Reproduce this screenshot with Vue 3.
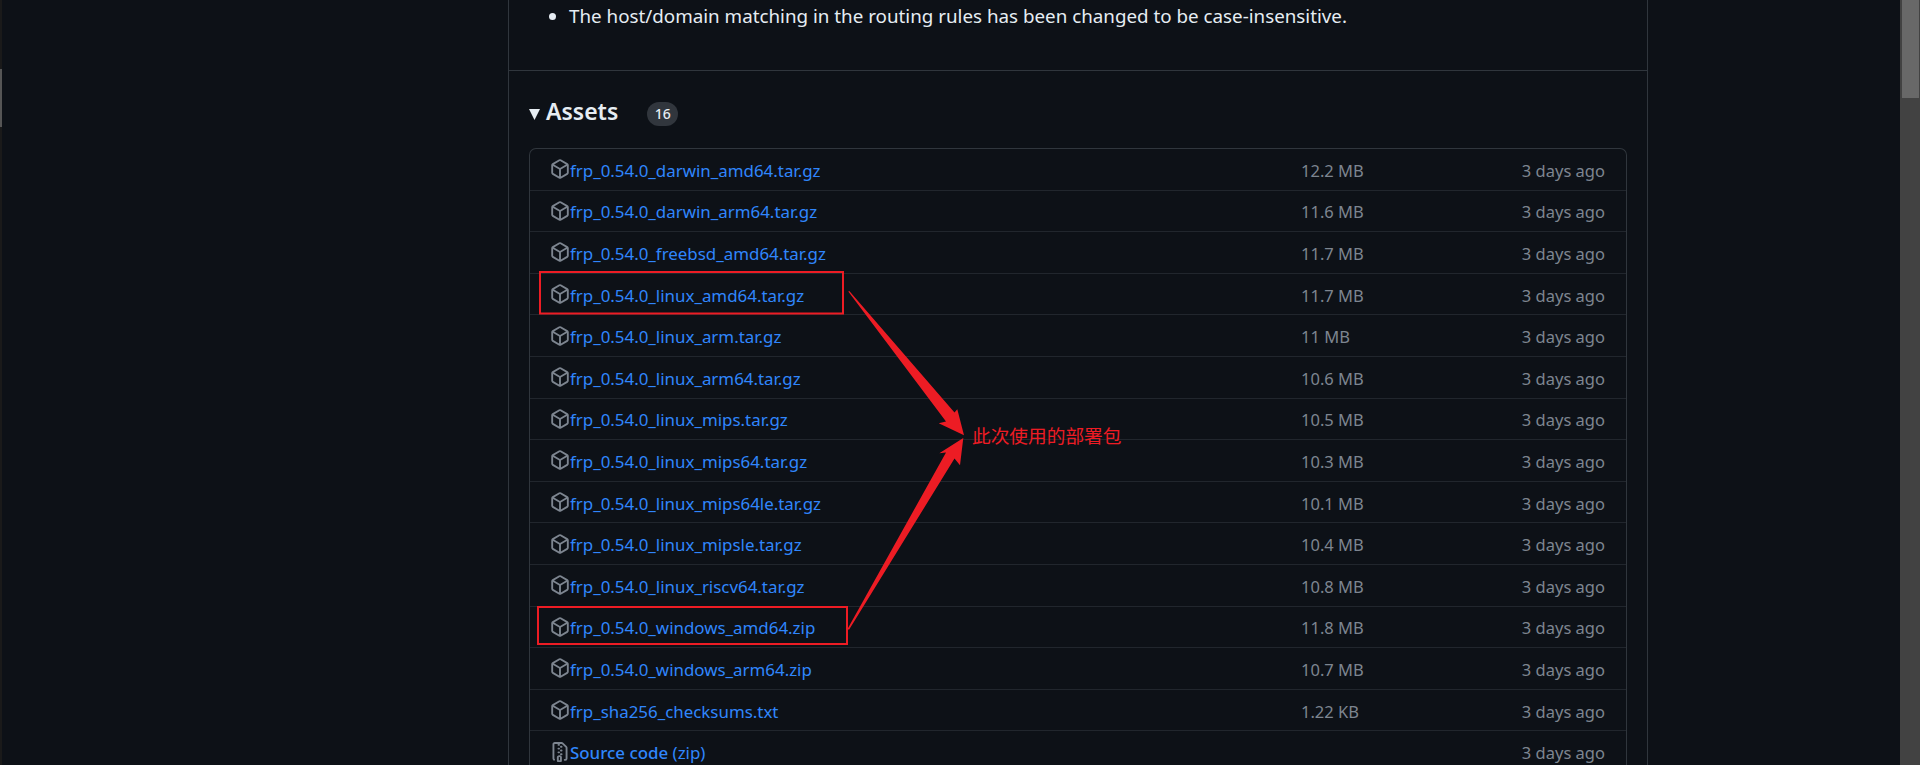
<script setup>
const assets = [
  { name: 'frp_0.54.0_darwin_amd64.tar.gz', size: '12.2 MB' },
  { name: 'frp_0.54.0_darwin_arm64.tar.gz', size: '11.6 MB' },
  { name: 'frp_0.54.0_freebsd_amd64.tar.gz', size: '11.7 MB' },
  { name: 'frp_0.54.0_linux_amd64.tar.gz', size: '11.7 MB' },
  { name: 'frp_0.54.0_linux_arm.tar.gz', size: '11 MB' },
  { name: 'frp_0.54.0_linux_arm64.tar.gz', size: '10.6 MB' },
  { name: 'frp_0.54.0_linux_mips.tar.gz', size: '10.5 MB' },
  { name: 'frp_0.54.0_linux_mips64.tar.gz', size: '10.3 MB' },
  { name: 'frp_0.54.0_linux_mips64le.tar.gz', size: '10.1 MB' },
  { name: 'frp_0.54.0_linux_mipsle.tar.gz', size: '10.4 MB' },
  { name: 'frp_0.54.0_linux_riscv64.tar.gz', size: '10.8 MB' },
  { name: 'frp_0.54.0_windows_amd64.zip', size: '11.8 MB' },
  { name: 'frp_0.54.0_windows_arm64.zip', size: '10.7 MB' },
  { name: 'frp_sha256_checksums.txt', size: '1.22 KB' }
]

const packagePath = 'm8.878.392 5.25 3.045c.54.314.872.89.872 1.514v6.098a1.75 1.75 0 0 1-.872 1.514l-5.25 3.045a1.75 1.75 0 0 1-1.756 0l-5.25-3.045A1.75 1.75 0 0 1 1 11.049V4.951c0-.624.332-1.201.872-1.514L7.122.392a1.75 1.75 0 0 1 1.756 0ZM7.875 1.69l-4.63 2.685L8 7.133l4.755-2.758-4.63-2.685a.248.248 0 0 0-.25 0ZM2.5 5.677v5.372c0 .09.047.171.125.216l4.625 2.683V8.432Zm6.25 8.271 4.625-2.683a.25.25 0 0 0 .125-.216V5.677L8.75 8.432Z'
const zipPath = 'M3.5 1.75v11.5c0 .09.048.173.126.217a.75.75 0 0 1-.752 1.298A1.748 1.748 0 0 1 2 13.25V1.75C2 .784 2.784 0 3.75 0h5.586c.464 0 .909.185 1.237.513l2.914 2.914c.329.328.513.773.513 1.237v8.586A1.75 1.75 0 0 1 12.25 15h-.5a.75.75 0 0 1 0-1.5h.5a.25.25 0 0 0 .25-.25V4.664a.25.25 0 0 0-.073-.177L9.513 1.573a.25.25 0 0 0-.177-.073H7.25a.75.75 0 0 1 0 1.5h-.5a.75.75 0 0 1 0-1.5h-3a.25.25 0 0 0-.25.25Zm3.75 8.75h.5c.966 0 1.75.784 1.75 1.75v3a.75.75 0 0 1-.75.75h-2.5a.75.75 0 0 1-.75-.75v-3c0-.966.784-1.75 1.75-1.75ZM6 5.25a.75.75 0 0 1 .75-.75h.5a.75.75 0 0 1 0 1.5h-.5A.75.75 0 0 1 6 5.25Zm.75 2.25h.5a.75.75 0 0 1 0 1.5h-.5a.75.75 0 0 1 0-1.5ZM8 6.75A.75.75 0 0 1 8.75 6h.5a.75.75 0 0 1 0 1.5h-.5A.75.75 0 0 1 8 6.75ZM8.75 3h.5a.75.75 0 0 1 0 1.5h-.5a.75.75 0 0 1 0-1.5ZM8 9.75A.75.75 0 0 1 8.75 9h.5a.75.75 0 0 1 0 1.5h-.5A.75.75 0 0 1 8 9.75Zm-1 2.5v2.25h1v-2.25a.25.25 0 0 0-.25-.25h-.5a.25.25 0 0 0-.25.25Z'
</script>

<template>
  <div class="page">
    <div class="left-rail"><div class="left-thumb"></div></div>

    <main class="main">
      <section class="release">
        <div class="notes">
          <ul>
            <li>The host/domain matching in the routing rules has been changed to be case-insensitive.</li>
          </ul>
        </div>

        <div class="assets">
          <div class="assets-head">
            <svg class="caret" width="11" height="11" viewBox="0 0 11 11"><polygon points="0,0 11,0 5.5,11" /></svg>
            <h3>Assets</h3>
            <span class="count">16</span>
          </div>

          <div class="asset-box">
            <div v-for="a in assets" :key="a.name" class="asset-row">
              <div class="asset-name">
                <svg class="icon" width="20" height="20" viewBox="0 0 16 16"><path :d="packagePath" /></svg>
                <a href="#">{{ a.name }}</a>
              </div>
              <span class="asset-size">{{ a.size }}</span>
              <span class="asset-date">3 days ago</span>
            </div>
            <div class="asset-row">
              <div class="asset-name">
                <svg class="icon" width="20" height="20" viewBox="0 0 16 16"><path :d="zipPath" /></svg>
                <a href="#"><span class="src">Source code</span> <span class="kind">(zip)</span></a>
              </div>
              <span class="asset-size"></span>
              <span class="asset-date">3 days ago</span>
            </div>
          </div>
        </div>
      </section>
    </main>

    <div class="scrollbar"><div class="scroll-thumb"></div></div>

    <!-- hand drawn markup on top of the screenshot -->
    <svg class="markup" width="1920" height="765" viewBox="0 0 1920 765">
      <rect x="540" y="272" width="303" height="41.5" fill="none" stroke="#ed1c24" stroke-width="2" />
      <rect x="538" y="607" width="309" height="37" fill="none" stroke="#ed1c24" stroke-width="2" />
      <polygon fill="#ed1c24" points="848.3,291.5 849.3,291 954.5,412.5 957.3,409.3 964,435.3 938.7,423.3 946,421.5" />
      <polygon fill="#ed1c24" points="847.5,629 849,629.8 954.5,458.5 960,465.3 963.3,438 939.3,453.3 946,452.5" />
    </svg>
    <span class="markup-note">此次使用的部署包</span>
  </div>
</template>

<style>
html, body { margin: 0; background: #0d1117; }
</style>

<style scoped>
.page {
  position: relative;
  display: flex;
  width: 1920px;
  height: 765px;
  overflow: hidden;
  background: #0d1117;
  color: #e6edf3;
  font-family: "Noto Sans", "Open Sans", sans-serif;
}
.left-rail { width: 2px; flex: none; background: #1a1a1a; padding-top: 69px; box-sizing: border-box; }
.left-thumb { height: 58px; background: #555; }
.main { flex: 1; min-width: 0; }
.release {
  width: 1140px;
  height: 765px;
  margin-left: 506px;
  box-sizing: border-box;
  border-left: 1px solid #30363d;
  border-right: 1px solid #30363d;
}
.notes {
  height: 71px;
  box-sizing: border-box;
  border-bottom: 1px solid #30363d;
}
.notes ul { margin: 0; padding: 0 0 0 60px; }
.notes li { font-size: 18.8px; line-height: 33px; }

.assets { padding: 0 20px; }
.assets-head {
  display: flex;
  align-items: center;
  height: 77px;
}
.caret { fill: #e6edf3; margin-top: 10px; margin-right: 6px; }
.assets-head h3 { margin: 2px 0 0; font-size: 23px; font-weight: 600; line-height: 30px; }
.count {
  margin-left: 29px;
  margin-top: 9px;
  width: 31px;
  height: 24px;
  border-radius: 12px;
  background: #31363d;
  font-size: 14px;
  font-weight: 500;
  line-height: 24px;
  text-align: center;
}
.asset-box {
  border: 1px solid #30363d;
  border-bottom: none;
  border-radius: 7px 7px 0 0;
}
.asset-row {
  display: flex;
  align-items: center;
  height: 41.6px;
  box-sizing: border-box;
  padding: 0 21px 0 20px;
  border-top: 1px solid #21262d;
  font-size: 16.5px;
}
.asset-row:first-child { border-top: none; height: 40.6px; }
.asset-name { display: flex; align-items: center; width: 751px; flex: none; }
.icon { fill: #7d8590; flex: none; }
.asset-name a { color: #3086fc; text-decoration: none; font-size: 16.9px; margin-top: 2px; }
.src { font-weight: 500; }
.kind { font-weight: 400; }
.asset-size { color: #7d8590; margin-top: 2px; }
.asset-date { margin-left: auto; color: #7d8590; margin-top: 2px; }

.scrollbar { width: 20px; flex: none; background: #424242; padding-left: 2px; box-sizing: border-box; }
.scroll-thumb { width: 17px; height: 98px; background: #686868; }

.markup { position: absolute; left: 0; top: 0; pointer-events: none; }
.markup-note {
  position: absolute;
  left: 972px;
  top: 421px;
  color: #ed1c24;
  font-family: "Noto Sans CJK SC", sans-serif;
  font-size: 18.7px;
  line-height: 28px;
  white-space: nowrap;
}
</style>
